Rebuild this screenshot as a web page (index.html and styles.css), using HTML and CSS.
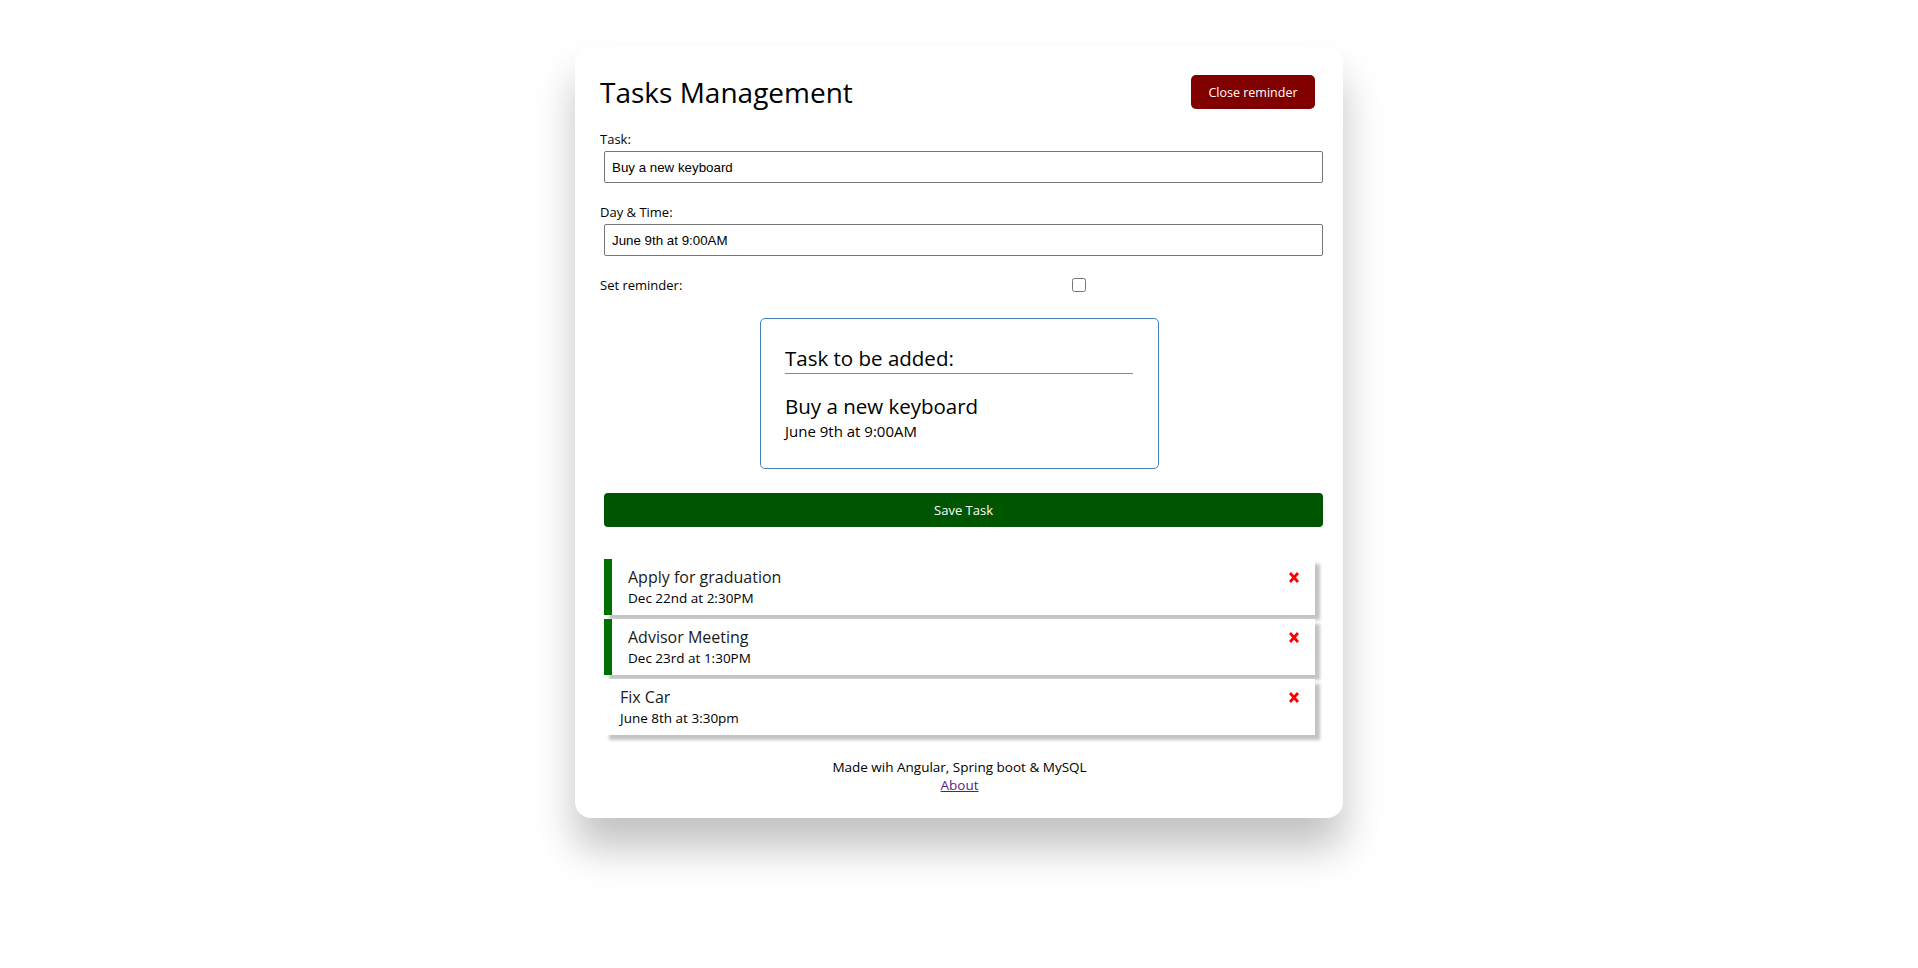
FILE: index.html
```html
<!DOCTYPE html>
<html lang="en">
<head>
  <meta charset="UTF-8" />
  <meta name="viewport" content="width=device-width, initial-scale=1.0"/>
  <title>Tasks Management</title>
  <link rel="stylesheet" href="styles.css">
</head>
<body>
  <div class="container">

    <!-- Cabecera -->
    <header class="header">
      <h1>Tasks Management</h1>
      <button class="btn btn-close">Close reminder</button>
    </header>

    <!-- Formulario -->
    <form class="add-form">
      <div class="form-control">
        <label>Task:</label>
        <input type="text" value="Buy a new keyboard">
      </div>
      <div class="form-control">
        <label>Day &amp; Time:</label>
        <input type="text" value="June 9th at 9:00AM">
      </div>
      <div class="form-control form-control-check">
        <label>Set reminder:</label>
        <span class="check-wrap"><input type="checkbox"></span>
      </div>

      <div class="preview">
        <h3>Task to be added:</h3>
        <h4>Buy a new keyboard</h4>
        <p>June 9th at 9:00AM</p>
      </div>

      <button type="button" class="btn btn-save">Save Task</button>
    </form>

    <!-- Lista de tareas -->
    <div class="tasks">
      <div class="task reminder">
        <div class="task-text">
          <h3>Apply for graduation</h3>
          <p>Dec 22nd at 2:30PM</p>
        </div>
        <svg class="del" width="10" height="11" viewBox="0 0 10 11"><path d="M1 1 L9 10 M9 1 L1 10" stroke="#ff0000" stroke-width="2.8" fill="none"/></svg>
      </div>
      <div class="task reminder">
        <div class="task-text">
          <h3>Advisor Meeting</h3>
          <p>Dec 23rd at 1:30PM</p>
        </div>
        <svg class="del" width="10" height="11" viewBox="0 0 10 11"><path d="M1 1 L9 10 M9 1 L1 10" stroke="#ff0000" stroke-width="2.8" fill="none"/></svg>
      </div>
      <div class="task">
        <div class="task-text">
          <h3>Fix Car</h3>
          <p>June 8th at 3:30pm</p>
        </div>
        <svg class="del" width="10" height="11" viewBox="0 0 10 11"><path d="M1 1 L9 10 M9 1 L1 10" stroke="#ff0000" stroke-width="2.8" fill="none"/></svg>
      </div>
    </div>

    <footer class="footer">
      <p>Made wih Angular, Spring boot &amp; MySQL</p>
      <a href="#">About</a>
    </footer>

  </div>
</body>
</html>
```

FILE: styles.css
```css
* {
  box-sizing: border-box;
  margin: 0;
  padding: 0;
}
html, body {
  min-height: 100vh;
}
body {
  font-family: "Open Sans", sans-serif;
  background-color: #fff;
  color: #000;
  padding-top: 47px;
}
.container {
  width: 768px;
  margin: 0 auto;
  padding: 24px 24px 24px 25px;
  background: #fff;
  border-radius: 16px;
  box-shadow: 0 30px 40px rgba(0, 0, 0, 0.24);
}
.header {
  display: flex;
  justify-content: space-between;
  align-items: center;
  margin-bottom: 16px;
}
.header h1 {
  font-size: 28px;
  font-weight: 400;
  line-height: 34px;
}
.btn {
  border: none;
  border-radius: 5px;
  color: #fff;
  font-family: inherit;
  font-size: 12.5px;
  cursor: pointer;
}
.btn-close {
  width: 124px;
  height: 34px;
  margin: 4px 4px 4px 0;
  background-color: #800000;
}
.form-control {
  margin-bottom: 19px;
}
.form-control label {
  display: block;
  font-size: 13px;
  line-height: 20px;
}
.form-control input[type="text"] {
  display: block;
  width: 100%;
  height: 32px;
  margin: 2px 0 0 4px;
  padding: 3px 7px;
  border: 1px solid #767676;
  border-radius: 2px;
  font-family: "Liberation Sans", Arial, sans-serif;
  font-size: 13.33px;
  color: #000;
}
.form-control-check {
  display: flex;
  align-items: center;
  margin-bottom: 23px;
}
.form-control-check label {
  flex: 1;
}
.check-wrap {
  flex: 2;
  display: flex;
  justify-content: center;
}
.check-wrap input {
  width: 14px;
  height: 14px;
  margin: 0;
}
.preview {
  width: 399px;
  margin: 0 auto;
  padding: 24px 25px 27px 24px;
  border: 1px solid steelblue;
  border-radius: 5px;
}
.preview h3 {
  font-size: 20.5px;
  font-weight: 400;
  line-height: 30px;
  border-bottom: 1px solid #888;
}
.preview h4 {
  margin-top: 17px;
  font-size: 20.5px;
  font-weight: 400;
  line-height: 30px;
}
.preview p {
  font-size: 15px;
  line-height: 20px;
}
.btn-save {
  display: block;
  width: 100%;
  height: 34px;
  margin: 24px 0 0 4px;
  background-color: #005500;
  border-radius: 4px;
  font-size: 13px;
}
.tasks {
  margin-top: 32px;
  padding: 0 4px;
}
.task {
  display: flex;
  justify-content: space-between;
  align-items: flex-start;
  height: 56px;
  margin-bottom: 4px;
  padding: 7px 16px 6px;
  background: #fff;
  box-shadow: 5px 5px 3px #c4c4c4;
}
.task.reminder {
  border-left: 8px solid #007000;
}
.task h3 {
  font-size: 16px;
  font-weight: 400;
  line-height: 23px;
  color: #1a1a1a;
}
.task p {
  font-size: 13.5px;
  line-height: 19px;
}
.del {
  margin-top: 6px;
}
.footer {
  margin-top: 23px;
  text-align: center;
  font-size: 13.5px;
  line-height: 18px;
}
.footer a {
  color: #551a8b;
}
```
